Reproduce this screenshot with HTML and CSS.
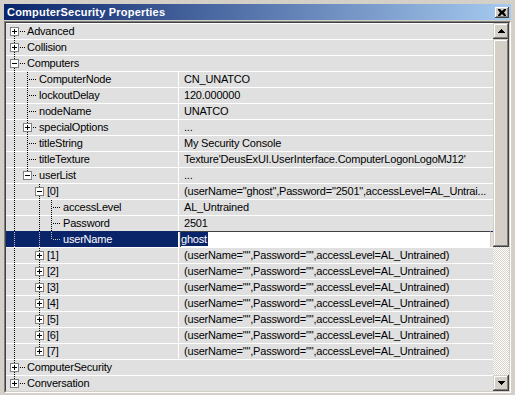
FILE: index.html
```html
<!DOCTYPE html>
<html lang="en">
<head>
    <meta charset="UTF-8">
    <title>ComputerSecurity Properties</title>
    <link rel="stylesheet" href="styles.css">
</head>
<body>
    <div class="window">
        <div class="titlebar">
            <span class="title">ComputerSecurity Properties</span>
            <div class="close">
                <svg width="8" height="7" viewBox="0 0 8 7"><path d="M0 0h2l2 2 2-2h2v1l-2 2.5 2 2.5v1h-2l-2-2-2 2h-2v-1l2-2.5-2-2.5z" fill="#000"/></svg>
            </div>
        </div>
        <div class="client">
            <div class="pane">
                <div class="grid">
                    <div class="row cat">
                        <div class="name"><span class="g c0 first"><i class="box plus"></i></span><span class="label">Advanced</span></div>
                    </div>
                    <div class="row cat">
                        <div class="name"><span class="g c0 tee"><i class="box plus"></i></span><span class="label">Collision</span></div>
                    </div>
                    <div class="row cat">
                        <div class="name"><span class="g c0 tee"><i class="box"></i></span><span class="label">Computers</span></div>
                    </div>
                    <div class="row">
                        <div class="name"><span class="g a0 pipe"></span><span class="g c1 tee"></span><span class="label">ComputerNode</span></div>
                        <div class="value">CN_UNATCO</div>
                    </div>
                    <div class="row">
                        <div class="name"><span class="g a0 pipe"></span><span class="g c1 tee"></span><span class="label">lockoutDelay</span></div>
                        <div class="value">120.000000</div>
                    </div>
                    <div class="row">
                        <div class="name"><span class="g a0 pipe"></span><span class="g c1 tee"></span><span class="label">nodeName</span></div>
                        <div class="value">UNATCO</div>
                    </div>
                    <div class="row">
                        <div class="name"><span class="g a0 pipe"></span><span class="g c1 tee"><i class="box plus"></i></span><span class="label">specialOptions</span></div>
                        <div class="value">...</div>
                    </div>
                    <div class="row">
                        <div class="name"><span class="g a0 pipe"></span><span class="g c1 tee"></span><span class="label">titleString</span></div>
                        <div class="value">My Security Console</div>
                    </div>
                    <div class="row">
                        <div class="name"><span class="g a0 pipe"></span><span class="g c1 tee"></span><span class="label">titleTexture</span></div>
                        <div class="value">Texture'DeusExUI.UserInterface.ComputerLogonLogoMJ12'</div>
                    </div>
                    <div class="row">
                        <div class="name"><span class="g a0 pipe"></span><span class="g c1 elbow"><i class="box"></i></span><span class="label">userList</span></div>
                        <div class="value">...</div>
                    </div>
                    <div class="row">
                        <div class="name"><span class="g a0 pipe"></span><span class="g a1"></span><span class="g c2 tee"><i class="box"></i></span><span class="label">[0]</span></div>
                        <div class="value">(userName="ghost",Password="2501",accessLevel=AL_Untrai...</div>
                    </div>
                    <div class="row">
                        <div class="name"><span class="g a0 pipe"></span><span class="g a1"></span><span class="g a2 pipe"></span><span class="g c3 tee"></span><span class="label">accessLevel</span></div>
                        <div class="value">AL_Untrained</div>
                    </div>
                    <div class="row">
                        <div class="name"><span class="g a0 pipe"></span><span class="g a1"></span><span class="g a2 pipe"></span><span class="g c3 tee"></span><span class="label">Password</span></div>
                        <div class="value">2501</div>
                    </div>
                    <div class="row sel">
                        <div class="name"><span class="g a0 pipe"></span><span class="g a1"></span><span class="g a2 pipe"></span><span class="g c3 elbow"></span><span class="label">userName</span></div>
                        <div class="value"><div class="edit"><span class="mark">ghost</span></div></div>
                    </div>
                    <div class="row">
                        <div class="name"><span class="g a0 pipe"></span><span class="g a1"></span><span class="g c2 tee"><i class="box plus"></i></span><span class="label">[1]</span></div>
                        <div class="value">(userName="",Password="",accessLevel=AL_Untrained)</div>
                    </div>
                    <div class="row">
                        <div class="name"><span class="g a0 pipe"></span><span class="g a1"></span><span class="g c2 tee"><i class="box plus"></i></span><span class="label">[2]</span></div>
                        <div class="value">(userName="",Password="",accessLevel=AL_Untrained)</div>
                    </div>
                    <div class="row">
                        <div class="name"><span class="g a0 pipe"></span><span class="g a1"></span><span class="g c2 tee"><i class="box plus"></i></span><span class="label">[3]</span></div>
                        <div class="value">(userName="",Password="",accessLevel=AL_Untrained)</div>
                    </div>
                    <div class="row">
                        <div class="name"><span class="g a0 pipe"></span><span class="g a1"></span><span class="g c2 tee"><i class="box plus"></i></span><span class="label">[4]</span></div>
                        <div class="value">(userName="",Password="",accessLevel=AL_Untrained)</div>
                    </div>
                    <div class="row">
                        <div class="name"><span class="g a0 pipe"></span><span class="g a1"></span><span class="g c2 tee"><i class="box plus"></i></span><span class="label">[5]</span></div>
                        <div class="value">(userName="",Password="",accessLevel=AL_Untrained)</div>
                    </div>
                    <div class="row">
                        <div class="name"><span class="g a0 pipe"></span><span class="g a1"></span><span class="g c2 tee"><i class="box plus"></i></span><span class="label">[6]</span></div>
                        <div class="value">(userName="",Password="",accessLevel=AL_Untrained)</div>
                    </div>
                    <div class="row">
                        <div class="name"><span class="g a0 pipe"></span><span class="g a1"></span><span class="g c2 elbow"><i class="box plus"></i></span><span class="label">[7]</span></div>
                        <div class="value">(userName="",Password="",accessLevel=AL_Untrained)</div>
                    </div>
                    <div class="row cat">
                        <div class="name"><span class="g c0 tee"><i class="box plus"></i></span><span class="label">ComputerSecurity</span></div>
                    </div>
                    <div class="row cat">
                        <div class="name"><span class="g c0 elbow"><i class="box plus"></i></span><span class="label">Conversation</span></div>
                    </div>
                </div>
                <div class="scrollbar">
                    <div class="sb-btn">
                        <svg width="7" height="4" viewBox="0 0 7 4"><path d="M3 0h1v1h1v1h1v1h1v1H0V3h1V2h1V1h1z" fill="#000"/></svg>
                    </div>
                    <div class="thumb"></div>
                    <div class="track"></div>
                    <div class="sb-btn">
                        <svg width="7" height="4" viewBox="0 0 7 4"><path d="M0 0h7v1H6v1H5v1H4v1H3V3H2V2H1V1H0z" fill="#000"/></svg>
                    </div>
                </div>
            </div>
        </div>
    </div>
</body>
</html>
```

FILE: styles.css
```css
body {
    margin: 0;
    background: #d4d0c8;
    font-family: "Liberation Sans", Arial, sans-serif;
    font-size: 11px;
    color: #000;
}

.window {
    width: 515px;
    height: 395px;
    box-sizing: border-box;
    padding: 4px 4px 0;
    overflow: hidden;
}

.titlebar {
    height: 16px;
    margin-bottom: 1px;
    display: flex;
    align-items: center;
    justify-content: space-between;
    padding: 0 2px 0 3px;
    background: linear-gradient(to right, #0a246a, #a6caf0);
}

.title {
    color: #fff;
    font-weight: bold;
    letter-spacing: 0.2px;
}

.close {
    width: 14px;
    height: 11px;
    display: flex;
    align-items: center;
    justify-content: center;
    background: #d4d0c8;
    box-shadow: inset -1px -1px #404040, inset 1px 1px #fff, inset -2px -2px #808080;
}

.client {
    border: 1px solid;
    border-color: #808080 #fff #fff #808080;
}

.pane {
    display: flex;
    height: 368px;
    border: 1px solid;
    border-color: #404040 #d4d0c8 #d4d0c8 #404040;
    overflow: hidden;
}

.grid {
    width: 487px;
    flex: none;
}

.row {
    --dot: #000;
    display: flex;
    height: 15px;
    border-top: 1px solid #fff;
    background: #e0e0e0;
    line-height: 15px;
    letter-spacing: -0.2px;
    white-space: nowrap;
}

.name {
    width: 172px;
    flex: none;
    display: flex;
    overflow: hidden;
}

.cat .name {
    flex: 1;
}

.label {
    margin-left: 2px;
}

.value {
    flex: 1;
    min-width: 0;
    border-left: 1px solid #fff;
    padding-left: 5px;
    overflow: hidden;
}

/* tree guides */
.g {
    position: relative;
    flex: none;
    height: 15px;
}

.a0 { width: 13px; }
.a1, .a2 { width: 12px; }
.c0 { width: 19px; }
.c1 { width: 18px; }
.c2 { width: 14px; }
.c3 { width: 18px; }

.pipe::before,
.tee::before,
.elbow::before,
.first::before {
    content: "";
    position: absolute;
    left: 8px;
    top: 0;
    width: 1px;
    height: 15px;
    background: repeating-linear-gradient(to bottom, var(--dot) 0 1px, transparent 1px 2px);
}

.elbow::before { height: 8px; }
.first::before { top: 8px; height: 7px; }

.tee::after,
.elbow::after,
.first::after {
    content: "";
    position: absolute;
    left: 9px;
    right: 0;
    top: 7px;
    height: 1px;
    background: repeating-linear-gradient(to right, transparent 0 1px, var(--dot) 1px 2px);
}

.box {
    position: absolute;
    z-index: 1;
    left: 4px;
    top: 3px;
    width: 9px;
    height: 9px;
    box-sizing: border-box;
    border: 1px solid #808080;
    background: #fff;
}

.box::before {
    content: "";
    position: absolute;
    left: 1px;
    top: 3px;
    width: 5px;
    height: 1px;
    background: #000;
}

.plus::after {
    content: "";
    position: absolute;
    left: 3px;
    top: 1px;
    width: 1px;
    height: 5px;
    background: #000;
}

/* selected row */
.row.sel {
    --dot: #c8c8c8;
    border-top-color: #0a246a;
}

.sel .name {
    background: #0a246a;
    color: #fff;
}

.sel .value {
    padding-left: 0;
    overflow: visible;
}

.edit {
    height: 16px;
    margin: -1px 2px 0 1px;
    box-sizing: border-box;
    border-top: 1px solid #404040;
    border-left: 1px solid #404040;
    border-right: 1px solid #d4d0c8;
    background: #fff;
    line-height: 14px;
}

.mark {
    display: inline-block;
    background: #0a246a;
    color: #fff;
    padding-right: 1px;
}

/* scrollbar */
.scrollbar {
    width: 16px;
    flex: none;
    display: flex;
    flex-direction: column;
}

.sb-btn,
.thumb {
    background: #d4d0c8;
    box-shadow: inset -1px -1px #404040, inset 1px 1px #d4d0c8, inset -2px -2px #808080, inset 2px 2px #fff;
}

.sb-btn {
    height: 16px;
    display: flex;
    align-items: center;
    justify-content: center;
}

.thumb {
    height: 208px;
}

.track {
    flex: 1;
    background: repeating-conic-gradient(#fff 0 25%, #d4d0c8 0 50%) 0 0 / 2px 2px;
}
```
